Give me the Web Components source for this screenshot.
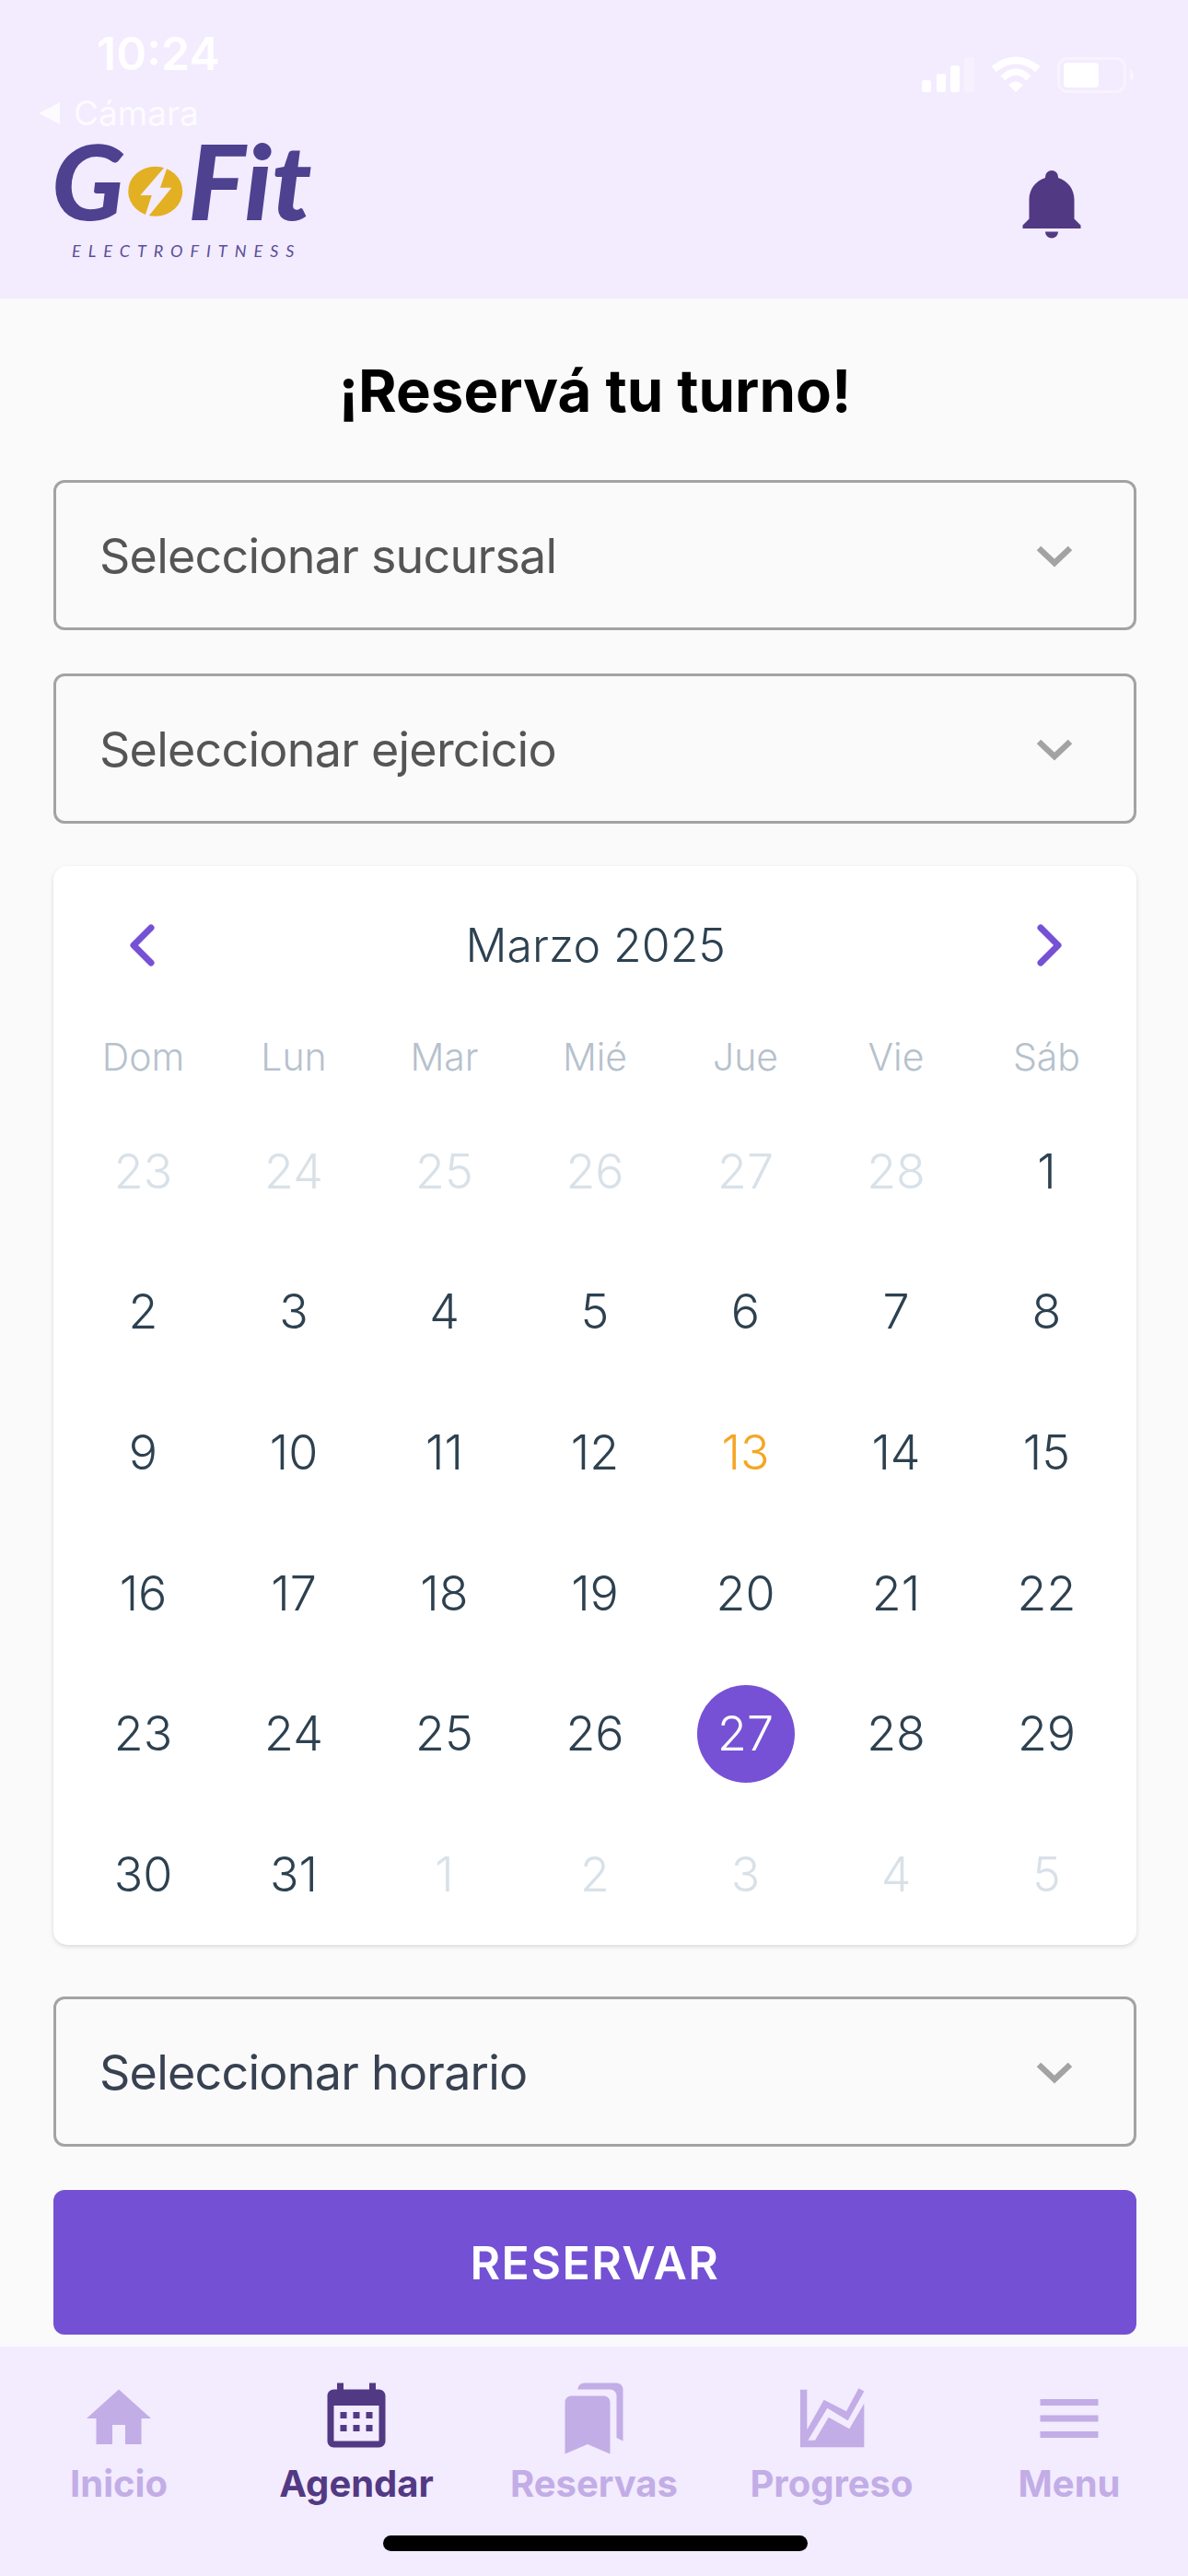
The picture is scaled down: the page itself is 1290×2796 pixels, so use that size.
<!DOCTYPE html>
<html lang="es">
<head>
<meta charset="utf-8">
<title>GoFit</title>
<style>
  html, body { margin: 0; padding: 0; }
  body {
    width: 1290px;
    height: 2796px;
    display: flex;
    flex-direction: column;
    overflow: hidden;
    background: #fafafa;
    font-family: Inter, "Liberation Sans", sans-serif;
  }
  booking-form { flex: 1; }
</style>
</head>
<body>
<app-header></app-header>
<booking-form>
  <select-field>Seleccionar sucursal</select-field>
  <select-field>Seleccionar ejercicio</select-field>
  <booking-calendar month="Marzo 2025"></booking-calendar>
  <select-field filled>Seleccionar horario</select-field>
  <primary-button>RESERVAR</primary-button>
</booking-form>
<tab-bar>
  <tab-item icon="home">Inicio</tab-item>
  <tab-item icon="calendar" active>Agendar</tab-item>
  <tab-item icon="bookmarks">Reservas</tab-item>
  <tab-item icon="chart">Progreso</tab-item>
  <tab-item icon="menu">Menu</tab-item>
</tab-bar>

<script>
class StatusBar extends HTMLElement {
  constructor() {
    super();
    this.attachShadow({ mode: "open" }).innerHTML = `
      <style>
        :host { display: block; color: #fff; }
        .top { display: flex; justify-content: space-between; height: 100px; }
        .time { margin: 27px 0 0 105px; font: 600 50px/62px Inter, sans-serif; }
        svg { display: block; margin: 61px 59px 0 0; }
        .back { display: flex; align-items: center; gap: 15px; height: 46px; padding-left: 42px; opacity: .8; font: 400 37px/46px Inter, sans-serif; }
        .back i { width: 0; height: 0; border: 12px solid transparent; border-left: 0; border-right: 23px solid #fff; }
      </style>
      <div class="top">
        <span class="time">10:24</span>
        <svg width="230" height="40" viewBox="1001 61 230 40">
          <g fill="#fff">
            <rect x="1001" y="87" width="10" height="13" rx="2.5"/>
            <rect x="1017" y="80" width="10" height="20" rx="2.5"/>
            <rect x="1032" y="71" width="10" height="29" rx="2.5"/>
            <rect x="1047" y="62" width="11" height="38" rx="2.5" opacity=".3"/>
            <path d="M1095 92Q1103 85 1111 92L1103 100Z"/>
            <rect x="1155" y="68" width="38" height="27" rx="4"/>
            <path d="M1227 75q4 2 4 6.500t-4 6.500z" opacity=".5"/>
          </g>
          <g fill="none" stroke="#fff">
            <path d="M1079 75Q1103 56 1127 75" stroke-width="8"/>
            <path d="M1089 85Q1103 71 1117 85" stroke-width="7"/>
            <rect x="1149.500" y="63.500" width="72" height="36" rx="10" stroke-width="3" opacity=".4"/>
          </g>
        </svg>
      </div>
      <div class="back"><i></i><span>Cámara</span></div>
    `;
  }
}
customElements.define("status-bar", StatusBar);

class GofitLogo extends HTMLElement {
  constructor() {
    super();
    this.attachShadow({ mode: "open" }).innerHTML = `
      <style>
        :host { display: block; width: 300px; color: #4d4190; }
        /* Lato is a little narrower than the logo face */
        .mark { display: flex; align-items: flex-end; height: 80px; margin-left: -4px; transform: scaleX(1.045); transform-origin: left center; font: italic 900 112px/80px Lato, sans-serif; white-space: nowrap; }
        .mark svg { display: block; margin: 0 5px 0 3px; flex: none; }
        .sub { margin: 29px 0 0 18px; font: italic 400 18px/14px Lato, sans-serif; letter-spacing: 8px; color: #5a4e98; white-space: nowrap; }
      </style>
      <div class="mark">
        <span>G</span>
        <svg width="58" height="56" viewBox="270 100 185 170" preserveAspectRatio="none">
          <ellipse cx="362" cy="184" rx="90" ry="82" fill="#e2b022"/>
          <path d="M398 98L312 197H350L326 270H336L416 172H378L404 98Z" fill="#f3ebfe"/>
        </svg>
        <span>Fit</span>
      </div>
      <div class="sub">ELECTROFITNESS</div>
    `;
  }
}
customElements.define("gofit-logo", GofitLogo);

class AppHeader extends HTMLElement {
  constructor() {
    super();
    this.attachShadow({ mode: "open" }).innerHTML = `
      <style>
        :host { display: block; height: 324px; flex: none; background: #f3ebfe; }
        .brand { display: flex; justify-content: space-between; align-items: flex-start; padding: 10px 106px 0 60px; }
        svg { display: block; margin-top: 22px; width: 84px; height: 84px; fill: #523983; }
      </style>
      <status-bar></status-bar>
      <div class="brand">
        <gofit-logo></gofit-logo>
        <svg viewBox="0 0 24 24"><path d="M21,19V20H3V19L5,17V11C5,7.900 7.030,5.170 10,4.290C10,4.190 10,4.100 10,4A2,2 0 0,1 12,2A2,2 0 0,1 14,4C14,4.100 14,4.190 14,4.290C16.970,5.170 19,7.900 19,11V17L21,19M14,21A2,2 0 0,1 12,23A2,2 0 0,1 10,21"/></svg>
      </div>
    `;
  }
}
customElements.define("app-header", AppHeader);

class BookingForm extends HTMLElement {
  constructor() {
    super();
    this.attachShadow({ mode: "open" }).innerHTML = `
      <style>
        :host { display: flex; flex-direction: column; padding: 0 56px 13px 58px; }
        h1 { margin: 0; height: 197px; padding-top: 60px; box-sizing: border-box; font: 700 63.500px/80px Inter, sans-serif; color: #000; text-align: center; }
        .stack { display: flex; flex-direction: column; gap: 47px; }
        ::slotted(booking-calendar) { margin-top: -1px; margin-bottom: 9px; }
      </style>
      <h1>¡Reservá tu turno!</h1>
      <div class="stack"><slot></slot></div>
    `;
  }
}
customElements.define("booking-form", BookingForm);

class SelectField extends HTMLElement {
  constructor() {
    super();
    this.attachShadow({ mode: "open" }).innerHTML = `
      <style>
        :host { display: flex; align-items: center; justify-content: space-between; box-sizing: border-box; height: 163px; padding: 0 66px 0 47px; border: 3px solid #a3a3a3; border-radius: 12px; font: 400 52px/64px Inter, sans-serif; letter-spacing: -.75px; color: #555; }
        :host([filled]) { color: #374151; }
        span { padding-top: 2px; }
        svg { display: block; flex: none; margin-top: 3px; }
      </style>
      <span><slot></slot></span>
      <svg width="40" height="25" viewBox="0 0 40 25"><path d="M3 3L20 19L37 3" fill="none" stroke="#a3a3a3" stroke-width="6.500"/></svg>
    `;
  }
}
customElements.define("select-field", SelectField);

const CAL_WEEK = ["Dom", "Lun", "Mar", "Mié", "Jue", "Vie", "Sáb"];

class BookingCalendar extends HTMLElement {
  constructor() {
    super();
    this.attachShadow({ mode: "open" }).innerHTML = `
      <style>
        :host { display: block; height: 1171px; padding: 0 15.750px; box-sizing: border-box; background: #fff; border-radius: 15px; box-shadow: 0 2px 5px rgba(0,0,0,.13); }
        .head { display: flex; align-items: center; justify-content: space-between; height: 172px; padding: 0 64.400px 0 66px; }
        .title { font: 300 50px/60px Inter, sans-serif; color: #2d4150; }
        .head svg { display: block; }
        .grid { display: grid; grid-template-columns: repeat(7, 163.500px); }
        .week { height: 70px; margin-bottom: 13.500px; align-items: center; text-align: center; font: 300 41px/70px Inter, sans-serif; color: #b6c1cd; }
        .days { grid-auto-rows: 152.600px; font: 300 52px/60px Inter, sans-serif; color: #2d4150; }
        .days span { display: flex; align-items: center; justify-content: center; }
        .days .off { color: #d9e1e8; }
        .days .today { color: #f5a623; }
        .days .sel b { display: flex; align-items: center; justify-content: center; width: 106px; height: 106px; border-radius: 50%; background: #7651d5; color: #fff; font-weight: 300; }
      </style>
      <div class="head">
        <svg width="28" height="46" viewBox="0 0 28 46"><path d="M24 4L5 23L24 42" fill="none" stroke="#7651d5" stroke-width="7" stroke-linecap="round" stroke-linejoin="round"/></svg>
        <span class="title"></span>
        <svg width="28" height="46" viewBox="0 0 28 46"><path d="M4 4L23 23L4 42" fill="none" stroke="#7651d5" stroke-width="7" stroke-linecap="round" stroke-linejoin="round"/></svg>
      </div>
      <div class="grid week"></div>
      <div class="grid days"></div>
    `;
  }

  connectedCallback() {
    const sr = this.shadowRoot;
    sr.querySelector(".title").textContent = this.getAttribute("month");
    sr.querySelector(".week").innerHTML = CAL_WEEK.map(d => `<span>${d}</span>`).join("");

    let html = "";
    for (let d = 23; d <= 28; d++) html += `<span class="off">${d}</span>`;
    for (let d = 1; d <= 31; d++) {
      if (d === 27) html += `<span class="sel"><b>27</b></span>`;
      else if (d === 13) html += `<span class="today">13</span>`;
      else html += `<span>${d}</span>`;
    }
    for (let d = 1; d <= 5; d++) html += `<span class="off">${d}</span>`;
    sr.querySelector(".days").innerHTML = html;
  }
}
customElements.define("booking-calendar", BookingCalendar);

class PrimaryButton extends HTMLElement {
  constructor() {
    super();
    this.attachShadow({ mode: "open" }).innerHTML = `
      <style>
        :host { display: flex; align-items: center; justify-content: center; height: 157px; border-radius: 12px; background: #7451d4; color: #fff; font: 600 50px/60px Inter, sans-serif; letter-spacing: 1.500px; }
      </style>
      <slot></slot>
    `;
  }
}
customElements.define("primary-button", PrimaryButton);

const TAB_ICONS = {
  home: `<svg viewBox="0 0 24 24"><path d="M10 20v-6h4v6h5v-8h3L12 3 2 12h3v8z"/></svg>`,
  calendar: `<svg viewBox="0 0 24 24"><path d="M19 3h-1V1h-2v2H8V1H6v2H5c-1.110 0-2 .900-2 2v14c0 1.100.890 2 2 2h14c1.100 0 2-.900 2-2V5c0-1.100-.900-2-2-2zm0 16H5V8h14v11zM7 10h2v2H7zm4 0h2v2h-2zm4 0h2v2h-2zM7 14h2v2H7zm4 0h2v2h-2zm4 0h2v2h-2z"/></svg>`,
  bookmarks: `<svg viewBox="0 0 24 24"><path d="M19 18l2 1V3c0-1.100-.900-2-2-2H8.990C7.890 1 7 1.900 7 3h10c1.100 0 2 .900 2 2v13zM15 5H5c-1.100 0-2 .900-2 2v16l7-3 7 3V7c0-1.100-.900-2-2-2z"/></svg>`,
  chart: `<svg viewBox="6 37.500 252 252"><path d="M30 70H52V200L107 103L180 140L220 65L238 75L185 170L118 130L55 235H78L122 160L190 197L238 115V257H30Z"/></svg>`,
  menu: `<svg viewBox="0 0 24 24"><path d="M3 18h18v-2H3v2zm0-5h18v-2H3v2zm0-7v2h18V6H3z"/></svg>`
};

class TabItem extends HTMLElement {
  constructor() {
    super();
    this.attachShadow({ mode: "open" }).innerHTML = `
      <style>
        :host { display: flex; flex-direction: column; align-items: center; width: 258px; color: #c2ade6; }
        :host([active]) { color: #523983; }
        .icon svg { display: block; width: 84px; height: 84px; fill: currentColor; }
        .label { font: 700 40px/58px Inter, sans-serif; }
      </style>
      <div class="icon"></div>
      <div class="label"><slot></slot></div>
    `;
  }

  connectedCallback() {
    this.shadowRoot.querySelector(".icon").innerHTML = TAB_ICONS[this.getAttribute("icon")] || "";
  }
}
customElements.define("tab-item", TabItem);

class TabBar extends HTMLElement {
  constructor() {
    super();
    this.attachShadow({ mode: "open" }).innerHTML = `
      <style>
        :host { position: relative; display: flex; box-sizing: border-box; flex: none; height: 249px; padding-top: 35.500px; background: #f3ebfe; }
        .home { position: absolute; left: 416px; top: 205px; width: 461px; height: 17px; border-radius: 9px; background: #000; }
      </style>
      <slot></slot>
      <div class="home"></div>
    `;
  }
}
customElements.define("tab-bar", TabBar);
</script>
</body>
</html>
